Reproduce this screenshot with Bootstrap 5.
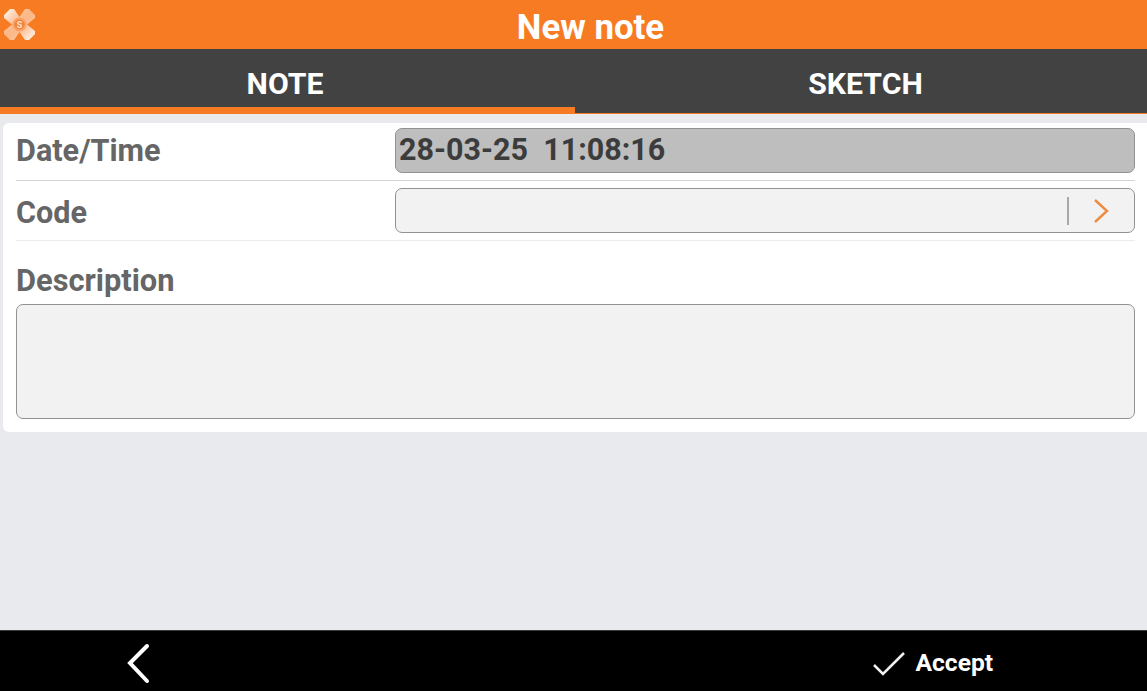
<!DOCTYPE html>
<html lang="en">
<head>
    <meta charset="UTF-8">
    <meta name="viewport" content="width=device-width, initial-scale=1.0">
    <title>New note</title>
    <link href="https://cdn.jsdelivr.net/npm/bootstrap@5.3.0/dist/css/bootstrap.min.css" rel="stylesheet">
    <style>
        html, body { height: 100%; }
        body {
            font-family: Roboto, "Liberation Sans", sans-serif;
            background-color: #e9eaee;
            overflow: hidden;
        }
        .app-shell { height: 691px; }
        .title-bar {
            height: 49px;
            background-color: #f77b22;
            color: #fff;
            font-size: 34.8px;
            font-weight: 700;
            line-height: 54px;
        }
        .title-logo { left: 3px; top: 8px; }
        .title-text { margin-left: 34px; }
        .tab-bar {
            height: 65px;
            background-color: #424242;
            border-bottom: 1px solid #f77b22;
        }
        .tab-item {
            flex: 1;
            color: #fff;
            font-size: 30.2px;
            font-weight: 700;
            line-height: 70px;
            padding-left: 9px;
        }
        .tab-item.is-active { flex: none; width: 575px; padding: 0 5px 0 0; box-shadow: inset 0 -6px 0 #f77b22; }
        .form-panel {
            height: 309px;
            margin: 9px 0 0 3px;
            padding: 0 12px 0 13px;
            background-color: #fff;
            border-radius: 6px 0 0 6px;
        }
        .form-row-line { border-bottom: 1px solid #d4d4d4; }
        .row-date { height: 58px; padding-top: 5px; }
        .row-code { height: 60px; padding-top: 7px; border-bottom-color: #ececec; }
        .field-label {
            width: 379px;
            color: #666;
            font-size: 30.6px;
            font-weight: 700;
        }
        .row-code .field-label { padding-top: 2px; }
        .field-box {
            flex: 1;
            background-color: #f2f2f2;
            border: 1px solid #929292;
            border-radius: 7px;
        }
        .box-date {
            height: 45px;
            background-color: #bebebe;
            color: #3c3c3c;
            font-size: 30.5px;
            font-weight: 700;
            line-height: 41px;
            padding-left: 3px;
            white-space: pre;
        }
        .box-code { height: 45px; }
        .code-sep { width: 2px; height: 28px; background-color: #a8a8a8; margin-right: 24px; }
        .code-arrow { margin-right: 25px; }
        .desc-label {
            color: #666;
            font-size: 30.8px;
            font-weight: 700;
            margin-top: 22px;
            line-height: 36px;
        }
        .box-desc { height: 115px; margin-top: 5px; flex: none; }
        .foot-bar {
            height: 61px;
            margin-top: auto;
            background-color: #000;
            border-top: 1px solid #3a3a3a;
            color: #fff;
        }
        .foot-half { width: 50%; }
        .foot-back { padding-left: 125px; padding-top: 6px; }
        .foot-accept { padding-left: 298px; padding-top: 5px; font-size: 24.6px; font-weight: 700; }
        .accept-check { margin-right: 10px; }
    </style>
</head>
<body>

<div class="app-shell d-flex flex-column">
    <!-- title bar -->
    <div class="title-bar position-relative text-center">
        <svg class="title-logo position-absolute" width="33" height="33" viewBox="0 0 33 33">
            <defs>
                <linearGradient id="armFade" x1="0" y1="0" x2="1" y2="1">
                    <stop offset="0" stop-color="#fffaf5"/>
                    <stop offset="0.42" stop-color="#fbb98a"/>
                    <stop offset="0.58" stop-color="#fbb98a"/>
                    <stop offset="1" stop-color="#fffaf5"/>
                </linearGradient>
            </defs>
            <path d="M1 7 L7 1 L11 1 L16.5 9 L22 1 L26 1 L32 7 L32 10 L24 16.5 L32 23 L32 26 L26 32 L22 32 L16.5 24 L11 32 L7 32 L1 26 L1 23 L9 16.5 L1 10 Z" fill="url(#armFade)"/>
            <circle cx="16.5" cy="16.5" r="7" fill="#f9a26a"/>
            <circle cx="16.5" cy="16.5" r="5" fill="#f4843a"/>
            <text x="16.5" y="20" text-anchor="middle" font-family="Roboto, sans-serif" font-size="9" font-weight="700" fill="#fde3cf">S</text>
        </svg>
        <span class="title-text d-inline-block">New note</span>
    </div>

    <!-- tabs -->
    <div class="tab-bar d-flex">
        <div class="tab-item is-active text-center">NOTE</div>
        <div class="tab-item text-center">SKETCH</div>
    </div>

    <!-- form -->
    <div class="form-panel">
        <div class="form-row-line row-date d-flex align-items-start">
            <div class="field-label">Date/Time</div>
            <div class="field-box box-date">28-03-25  11:08:16</div>
        </div>
        <div class="form-row-line row-code d-flex align-items-start">
            <div class="field-label">Code</div>
            <div class="field-box box-code d-flex align-items-center justify-content-end">
                <div class="code-sep"></div>
                <svg class="code-arrow" width="16" height="26" viewBox="0 0 16 26">
                    <path d="M2 2 L14 13 L2 24" fill="none" stroke="#ef8a3f" stroke-width="2.4"/>
                </svg>
            </div>
        </div>
        <div class="desc-label">Description</div>
        <div class="field-box box-desc"></div>
    </div>

    <!-- bottom bar -->
    <div class="foot-bar d-flex">
        <div class="foot-half foot-back d-flex align-items-center">
            <svg width="28" height="42" viewBox="0 0 28 42">
                <path d="M22 3 L5 20 L22 38" fill="none" stroke="#fff" stroke-width="4" stroke-linecap="round"/>
            </svg>
        </div>
        <div class="foot-half foot-accept d-flex align-items-center">
            <svg class="accept-check" width="34" height="26" viewBox="0 0 34 26">
                <path d="M2 14 L11 23 L32 2" fill="none" stroke="#f0f0f0" stroke-width="2.6"/>
            </svg>
            <span>Accept</span>
        </div>
    </div>
</div>

<script src="https://cdn.jsdelivr.net/npm/bootstrap@5.3.0/dist/js/bootstrap.bundle.min.js"></script>
</body>
</html>
